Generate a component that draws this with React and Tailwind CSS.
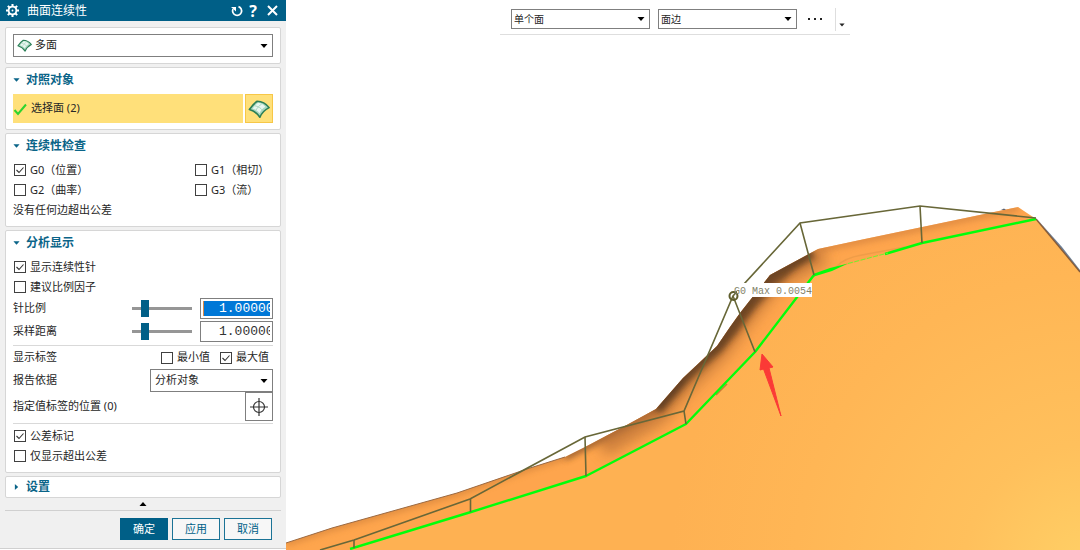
import React from 'react';

// Small triangle used by drop-downs and section headers
const Caret = ({ className = '' }) => (
  <svg className={className} width="8" height="4" viewBox="0 0 8 4" fill="currentColor" aria-hidden="true">
    <path d="M0.5 0h7L4 4z" />
  </svg>
);

const SurfaceIcon = ({ size }) => (
  <svg width={size} height={size} viewBox="0 0 24 24" aria-hidden="true">
    <path d="M1.500 12.500C4 9 7 5.500 10 3.500C15 3.500 20 6.500 23 10.500C19 12.500 15 16 13 21C10.500 17 6.500 14 1.500 12.500z" fill="#a9d8c0" stroke="#2c7f57" strokeWidth="1.800" strokeLinejoin="round" />
    <path d="M5 11.500C7 9 9 6.500 11 5.200C14 5.500 17 7 19 9.500C16 11 14 13.500 12.500 16.500C10.500 14 8 12.500 5 11.500z" fill="#e9f7f0" />
    <path d="M7.500 8.500C11 9 14 11 16 13.500M15 6.500C12 8.500 10 11 8.500 13.500" fill="none" stroke="#a9d4c1" strokeWidth="1" />
  </svg>
);

const Select = ({ label, options, className = '', selectClass = '', icon }) => (
  <div className={`relative flex items-center border border-[#7f7f7f] bg-white ${className}`}>
    {icon}
    <select
      aria-label={label}
      className={`h-full min-w-0 flex-1 appearance-none bg-transparent pr-4 outline-none ${selectClass}`}
    >
      {options.map((option) => (
        <option key={option}>{option}</option>
      ))}
    </select>
    <Caret className="pointer-events-none absolute right-1 text-black" />
  </div>
);

const Checkbox = ({ label, checked = false, className = '' }) => (
  <label className={`flex items-center gap-1 ${className}`}>
    <span className="relative flex size-3 shrink-0">
      <input
        type="checkbox"
        defaultChecked={checked}
        className="peer size-3 appearance-none border border-[#404040] bg-white"
      />
      <svg
        className="pointer-events-none absolute inset-0 hidden size-3 peer-checked:block"
        viewBox="0 0 12 12"
        fill="none"
        stroke="#333"
        strokeWidth="1.100"
      >
        <path d="M2.500 6l2.500 2.500 4.500-5" />
      </svg>
    </span>
    <span className="whitespace-nowrap">{label}</span>
  </label>
);

const Section = ({ title, open = true, children }) => (
  <section className={`rounded-xs border border-[#d6d6d6] bg-white px-[7px] ${open ? 'pt-[2px] pb-[6px]' : ''}`}>
    <h2 className="text-xs/5 font-bold text-[#0a6488]">
      <button type="button" aria-expanded={open} className="flex items-center">
        <span className="flex w-[13px] shrink-0">
          <Caret className={open ? 'w-[7px]' : 'w-[7px] -rotate-90'} />
        </span>
        {title}
      </button>
    </h2>
    {children}
  </section>
);

const ScaleRow = ({ label, selected = false }) => (
  <div className="flex h-[23px] items-center">
    <span className="flex-1">{label}</span>
    <input
      type="range"
      aria-label={label}
      min="0"
      max="100"
      defaultValue="18"
      className="h-[17px] w-[60px] appearance-none bg-transparent [&::-webkit-slider-runnable-track]:h-[3px] [&::-webkit-slider-runnable-track]:bg-[#969696] [&::-webkit-slider-thumb]:-mt-[7px] [&::-webkit-slider-thumb]:h-[17px] [&::-webkit-slider-thumb]:w-2 [&::-webkit-slider-thumb]:appearance-none [&::-webkit-slider-thumb]:bg-[#005f87]"
    />
    <div className="ml-2 flex h-[21px] w-[73px] border border-[#7f7f7f] bg-white p-[2px]">
      <input
        type="text"
        aria-label={`${label}值`}
        defaultValue="1.00000"
        className={
          selected
            ? 'w-full border-l border-[#d98a4a] bg-[#0078d7] pl-[15px] font-["Liberation_Mono",monospace] text-[13px] text-white outline-none'
            : 'w-full border-l border-transparent pl-[15px] font-["Liberation_Mono",monospace] text-[13px] text-[#333] outline-none'
        }
      />
    </div>
  </div>
);

const DialogPanel = () => (
  <aside className="flex w-[286px] shrink-0 flex-col self-start border-b border-[#d0d0d0] bg-[#f0f0f0] text-[11px] text-[#262626]">
    <header className="flex h-[21px] items-center bg-[#005f87] pr-2 pl-[6px] text-white">
      <svg width="13" height="13" viewBox="0 0 14 14" fill="none" stroke="currentColor" aria-hidden="true">
        <circle cx="7" cy="7" r="4.200" strokeWidth="2" />
        <circle cx="7" cy="7" r="1" fill="currentColor" stroke="none" />
        <path d="M7 0v3M7 11v3M0 7h3M11 7h3M2 2l2 2M10 10l2 2M12 2l-2 2M4 10l-2 2" strokeWidth="2.200" />
      </svg>
      <h1 className="ml-2 flex-1 pt-px text-xs">曲面连续性</h1>
      <button type="button" aria-label="重置">
        <svg width="12" height="12" viewBox="0 0 12 12" fill="none" stroke="currentColor" strokeWidth="1.700">
          <path d="M7.500 1.600A4.500 4.500 0 1 1 2 4" />
          <path d="M0 2h5v4.500z" fill="currentColor" stroke="none" />
        </svg>
      </button>
      <button type="button" aria-label="帮助" className="ml-[6px] text-base/5 font-bold">?</button>
      <button type="button" aria-label="关闭" className="ml-[10px]">
        <svg width="11" height="11" viewBox="0 0 11 11" fill="none" stroke="currentColor" strokeWidth="2">
          <path d="M1 1l9 9M10 1l-9 9" />
        </svg>
      </button>
    </header>

    <div className="flex flex-col gap-[3px] px-[5px] pt-[6px]">
      <div className="rounded-xs border border-[#d6d6d6] bg-white px-[7px] py-[6px]">
        <Select
          label="类型"
          options={['多面', '单面']}
          className="h-[23px] pl-[3px]"
          selectClass="pl-[3px]"
          icon={<SurfaceIcon size={15} />}
        />
      </div>

      <Section title="对照对象">
        <div className="mt-1 flex h-[29px] gap-[2px]">
          <div className="flex flex-1 items-center gap-1 bg-[#ffe07a]">
            <svg width="14" height="14" viewBox="0 0 14 14" fill="none" stroke="#2fd42f" strokeWidth="2" aria-hidden="true">
              <path d="M1.500 8l3.500 4L13 2.500" />
            </svg>
            选择面 (2)
          </div>
          <button
            type="button"
            aria-label="选择面"
            className="flex w-7 items-center justify-center border border-[#f7c747] bg-[#ffe07a]"
          >
            <SurfaceIcon size={22} />
          </button>
        </div>
      </Section>

      <Section title="连续性检查">
        <div className="mt-1 grid grid-cols-[181px_1fr] pl-px leading-5">
          <Checkbox label="G0（位置）" checked />
          <Checkbox label="G1（相切）" />
          <Checkbox label="G2（曲率）" />
          <Checkbox label="G3（流）" />
        </div>
        <p className="leading-5">没有任何边超出公差</p>
      </Section>

      <Section title="分析显示">
        <div className="mt-1 pl-px leading-5">
          <Checkbox label="显示连续性针" checked />
          <Checkbox label="建议比例因子" />
        </div>
        <ScaleRow label="针比例" selected />
        <ScaleRow label="采样距离" />
        <div className="mt-[2px] flex h-6 items-center border-t border-[#d9d9d9]">
          <span className="flex-1">显示标签</span>
          <Checkbox label="最小值" className="mr-[10px]" />
          <Checkbox label="最大值" checked className="mr-1" />
        </div>
        <div className="flex h-[23px] items-center">
          <span className="flex-1">报告依据</span>
          <Select label="报告依据" options={['分析对象', '曲面']} className="h-[23px] w-[123px]" selectClass="pl-1" />
        </div>
        <div className="flex h-[29px] items-center">
          <span className="flex-1">指定值标签的位置 (0)</span>
          <button
            type="button"
            aria-label="指定位置"
            className="flex h-[29px] w-7 items-center justify-center border border-[#7f7f7f] bg-white"
          >
            <svg width="18" height="18" viewBox="0 0 18 18" fill="none" stroke="#333" strokeWidth="1.200">
              <circle cx="9" cy="9" r="5.500" />
              <path d="M9 0v18M0 9h18" />
            </svg>
          </button>
        </div>
        <div className="mt-[2px] border-t border-[#d9d9d9] pt-[2px] pl-px leading-5">
          <Checkbox label="公差标记" checked />
          <Checkbox label="仅显示超出公差" />
        </div>
      </Section>

      <Section title="设置" open={false} />
    </div>

    <button type="button" aria-label="折叠" className="flex h-3 items-center justify-center text-black">
      <Caret className="rotate-180" />
    </button>
    <footer className="mx-[5px] flex justify-end gap-1 border-t border-[#d0d0d0] px-[9px] pt-[7px] pb-2 leading-5">
      <button type="button" className="w-12 border border-[#005f87] bg-[#005f87] text-white">确定</button>
      <button type="button" className="w-12 border border-[#1b7396] bg-[#f7f7f7] text-[#005f87]">应用</button>
      <button type="button" className="w-12 border border-[#1b7396] bg-[#f7f7f7] text-[#005f87]">取消</button>
    </footer>
  </aside>
);

const SelectionBar = () => (
  <div className="relative ml-[214px] flex h-[35px] w-[350px] items-center border-b border-[#dedede] pt-1 pl-[11px] text-[10px] text-[#262626]">
    <Select label="选择范围" options={['单个面', '相切面']} className="h-5 w-[139px]" selectClass="pl-[2px]" />
    <Select label="边规则" options={['面边', '单边']} className="ml-2 h-5 w-[139px]" selectClass="pl-[2px]" />
    <button type="button" aria-label="更多" className="ml-[11px]">
      <svg width="14" height="4" viewBox="0 0 14 4" fill="#222">
        <path d="M0 1h2v2H0zM6 1h2v2H6zM12 1h2v2h-2z" />
      </svg>
    </button>
    <button type="button" aria-label="工具条选项" className="ml-[13px] flex h-[23px] items-end border-l border-[#dedede] pb-1 pl-[3px]">
      <Caret className="w-[6px]" />
    </button>
  </div>
);

const SURFACE =
  'M286 543L332 528L457 493L530 468L565 457L585 447L623 427L656 409L683 378L717 346L730 327L740 313L770 275L818 249L860 240L1018 207L1036 219L1080 272V550H286z';

const Viewport = () => (
  <svg
    className="absolute inset-0 size-full"
    viewBox="286 0 794 550"
    preserveAspectRatio="xMinYMin slice"
    role="img"
    aria-label="曲面连续性分析"
  >
    <defs>
      <radialGradient id="face" gradientUnits="userSpaceOnUse" cx="1090" cy="570" r="420">
        <stop offset="0" stopColor="#ffd066" />
        <stop offset="0.300" stopColor="#ffc05c" />
        <stop offset="0.700" stopColor="#ffb655" />
        <stop offset="1" stopColor="#feb152" />
      </radialGradient>
      <clipPath id="surface">
        <path d={SURFACE} />
      </clipPath>
      <filter id="soft" x="-20%" y="-20%" width="140%" height="140%">
        <feGaussianBlur stdDeviation="7" />
      </filter>
      <filter id="softer" x="-20%" y="-20%" width="140%" height="140%">
        <feGaussianBlur stdDeviation="3" />
      </filter>
    </defs>

    <path d="M1036 218L1062 247L1080 270V274z" fill="#6d7f96" />
    <path d={SURFACE} fill="#fea54d" />
    <g clipPath="url(#surface)">
      {/* shaded fold along the upper silhouette */}
      <g fill="none" strokeLinejoin="round">
        <path d="M286 543L332 528L457 493L530 468L565 457" stroke="#c87a38" strokeWidth="6" filter="url(#softer)" opacity="0.600" />
        <path d="M565 457L623 427L656 409L683 378" stroke="#7b4a26" strokeWidth="7" filter="url(#softer)" opacity="0.800" />
        <path d="M818 249L860 240L1018 207" stroke="#d98640" strokeWidth="8" filter="url(#softer)" opacity="0.800" />
        <path d="M600 445L656 412L683 381L717 348L740 317L770 280L822 251" stroke="#b56d34" strokeWidth="26" filter="url(#soft)" opacity="0.700" />
        <path d="M656 409L683 378L717 346L740 313L770 275L812 252" stroke="#4c301c" strokeWidth="13" filter="url(#softer)" opacity="0.750" />
      </g>
      <path d="M732 326L740 313L770 275L800 260L784 280L757 306L736 334L706 362z" fill="#6b4223" filter="url(#softer)" opacity="0.650" />
      {/* front face */}
      <path d="M350 550L471 512L586 476L686 424L755 352L814 275L850 264L922 243L1036 219L1080 272V550z" fill="url(#face)" />
      <path d="M836 267C842 260 850 257 862 255L905 247" fill="none" stroke="#ef9d48" strokeWidth="1.500" />
      <path d="M716 395L727 384" stroke="#c87a35" strokeWidth="1.500" />
    </g>
    <path d="M286 543L332 528L457 493L530 468L565 457" fill="none" stroke="#9b6a43" strokeWidth="1" />
    <path d="M1036 219L1080 272" stroke="#875b38" strokeWidth="1.300" />
    <path d="M1001 210l3-1.500l2 1.500z" fill="#5f6470" />

    {/* shared edge */}
    <g fill="none" stroke="#00ff0a" strokeLinejoin="round">
      <path d="M350 549L471 512L586 476L686 424L755 352L814 275" strokeWidth="2.400" />
      <path d="M885 254L922 243L1036 219" strokeWidth="2.400" />
    </g>
    <path d="M813 274L830 268L848 263.500L832 271L814 276.500z" fill="#00ff0a" />
    <path d="M848 263.500L888 253" stroke="#70f52a" strokeWidth="1" strokeDasharray="5 1.500" />

    {/* continuity needles */}
    <g fill="none" stroke="#686738" strokeWidth="1.600">
      <path d="M320 550L354 540L470 499L585 437L684 411L733 296L800 223L920 206L1036 218" />
      <path d="M354 540v8M470.500 499v13M585 437l1 39M684 411l2 13M733 296l22 56M800 223l14 52M920 206l2 37" />
    </g>
    <rect x="737" y="283" width="75" height="14" fill="#fff" />
    <circle cx="733.500" cy="296" r="4" fill="none" stroke="#5e5d2c" strokeWidth="2" />
    <text x="734" y="294" fontSize="10" fill="#83836a" className='font-["Liberation_Mono",monospace]'>
      G0 Max 0.0054
    </text>

    <path d="M762 354L773 367L769 368L781 416L763.500 369L760 370z" fill="#fb3a36" stroke="#fb3a36" strokeLinejoin="round" />
  </svg>
);

export default function App() {
  return (
    <div className='flex min-h-screen bg-white font-["Noto_Sans","Noto_Sans_CJK_SC",sans-serif]'>
      <DialogPanel />
      <main className="relative flex-1 overflow-hidden">
        <Viewport />
        <SelectionBar />
      </main>
    </div>
  );
}
